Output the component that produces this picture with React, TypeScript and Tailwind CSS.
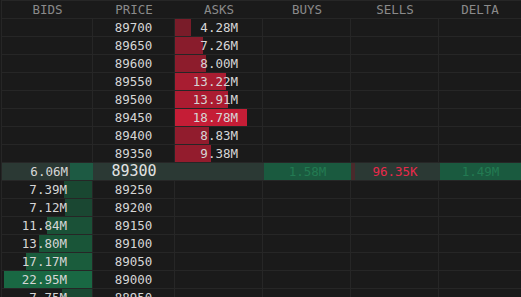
import React from "react";

// order book ladder
const asks = [
  { price: 89700, size: 4.28 },
  { price: 89650, size: 7.26 },
  { price: 89600, size: 8.0 },
  { price: 89550, size: 13.22 },
  { price: 89500, size: 13.91 },
  { price: 89450, size: 18.78 },
  { price: 89400, size: 8.83 },
  { price: 89350, size: 9.38 },
];

const bids = [
  { price: 89250, size: 7.39 },
  { price: 89200, size: 7.12 },
  { price: 89150, size: 11.84 },
  { price: 89100, size: 13.8 },
  { price: 89050, size: 17.17 },
  { price: 89000, size: 22.95 },
  { price: 88950, size: 7.75 },
];

const MAX = 22.95;
const BAR = 88;

const cols = "grid grid-cols-[91px_82px_88px_88px_88px_82px]";
const cell = "relative h-full border-r border-[#262626]";

function alpha(r: number) {
  return Math.min(1, 0.49 + 0.613 * (r - 0.19));
}

function Row({
  bid,
  price,
  ask,
}: {
  bid?: number;
  price: number;
  ask?: number;
}) {
  return (
    <div className={`${cols} h-[18px] border-b border-[#262626] text-[12.5px] leading-[17px] text-[#d6d6d6]`}>
      <div className={cell}>
        {bid !== undefined && (
          <>
            <div
              className="absolute right-0 top-0 h-[17px]"
              style={{ width: (bid / MAX) * BAR, backgroundColor: `rgba(26,110,70,${alpha(bid / MAX) * 0.95})` }}
            />
            <div className="relative pr-[25px] text-right">{bid.toFixed(2)}M</div>
          </>
        )}
      </div>
      <div className={`${cell} text-center`}>{price}</div>
      <div className={cell}>
        {ask !== undefined && (
          <>
            <div
              className="absolute left-0 top-0 h-[17px]"
              style={{ width: (ask / MAX) * BAR, backgroundColor: `rgba(222,30,58,${alpha(ask / MAX)})` }}
            />
            <div className="relative pr-[24px] text-right">{ask.toFixed(2)}M</div>
          </>
        )}
      </div>
      <div className={cell} />
      <div className={cell} />
      <div className="h-full" />
    </div>
  );
}

export default function App() {
  const headers = ["BIDS", "PRICE", "ASKS", "BUYS", "SELLS", "DELTA"];
  return (
    <div
      className="h-[297px] w-[521px] overflow-hidden bg-[#1a1a1a] pl-[1px]"
      style={{ fontFamily: '"DejaVu Sans Mono", "Liberation Mono", monospace' }}
    >
      <div className="border-l border-t border-[#262626]">
        <div className={`${cols} h-[18px] border-b border-[#262626] text-[12.5px] leading-[17px] text-[#8a8a8a]`}>
          {headers.map((h) => (
            <div key={h} className="text-center">
              {h}
            </div>
          ))}
        </div>

        {asks.map((a) => (
          <Row key={a.price} price={a.price} ask={a.size} />
        ))}

        {/* current price */}
        <div className={`${cols} h-[18px] border-b border-[#262626] bg-[#2b3934] text-[12.5px] leading-[17px]`}>
          <div className="relative h-full">
            <div
              className="absolute right-0 top-0 h-[17px] bg-[#1d5a43]"
              style={{ width: (6.06 / MAX) * BAR }}
            />
            <div className="relative pr-[25px] text-right text-[#d6d6d6]">6.06M</div>
          </div>
          <div className="text-center text-[15px] leading-[17px] text-[#e2e2e2]">89300</div>
          <div className="h-full" />
          <div className="ml-[1px] h-[17px] bg-[#1a5a3f] text-center text-[#237a52]">1.58M</div>
          <div className="relative h-[17px] text-center text-[#e8294b]">
            <div className="absolute left-0 top-0 h-[17px] w-[4px] bg-[#4a2a2c]" />
            <span className="relative">96.35K</span>
          </div>
          <div className="ml-[1px] h-[17px] bg-[#1a5a3f] text-center text-[#237a52]">1.49M</div>
        </div>

        {bids.map((b) => (
          <Row key={b.price} price={b.price} bid={b.size} />
        ))}
      </div>
    </div>
  );
}
